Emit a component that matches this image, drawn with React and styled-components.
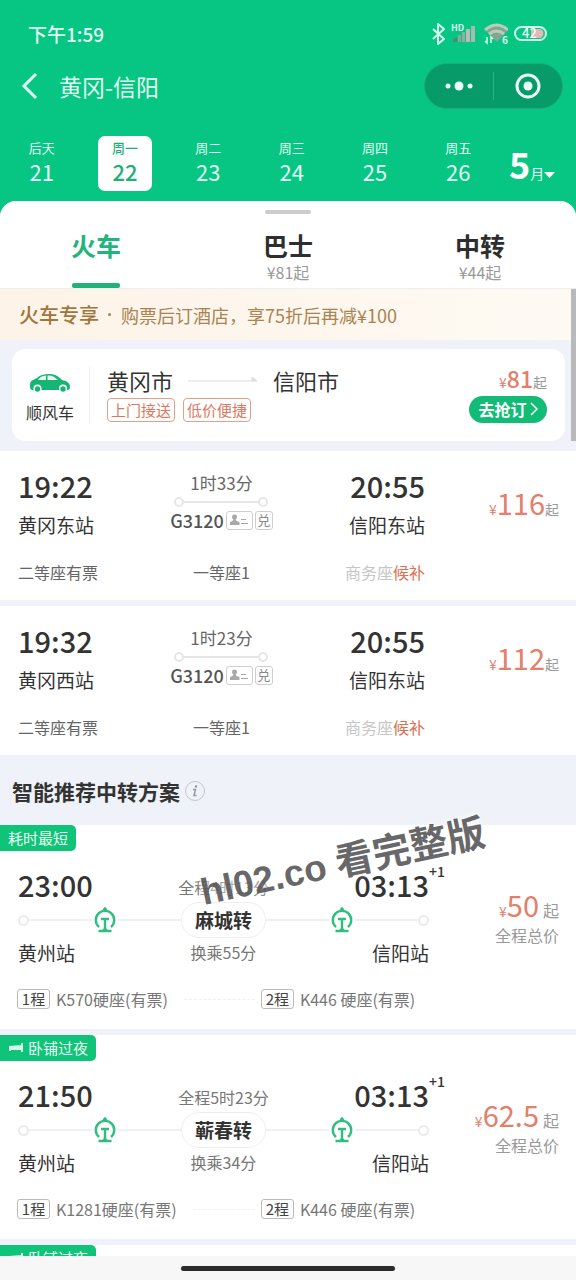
import styled, { createGlobalStyle } from "styled-components";

const GlobalStyle = createGlobalStyle`
  * {
    box-sizing: border-box;
  }
  body {
    margin: 0;
    font-family: "Noto Sans CJK SC", sans-serif;
    color: #333333;
  }
  button {
    font-family: inherit;
    color: inherit;
    background: none;
    border: none;
    padding: 0;
    cursor: pointer;
  }
  p, h1, h2 {
    margin: 0;
    font-weight: 400;
  }
`;

const Page = styled.div`
  height: 100vh;
  display: flex;
  flex-direction: column;
  overflow: hidden;
  background: #07c583;
`;

const Header = styled.header`
  color: #e2fff3;
`;

const StatusBar = styled.div`
  height: 60px;
  padding: 6px 29px 0 28px;
  display: flex;
  align-items: center;
  justify-content: space-between;
  font-size: 19px;
  font-weight: 500;
  .icons {
    display: flex;
    align-items: center;
    gap: 6px;
    padding-top: 2px;
  }
`;

const NavBar = styled.nav`
  height: 52px;
  padding: 0 13px 0 20px;
  display: flex;
  align-items: center;
  .back {
    display: flex;
    margin-right: 19px;
  }
  h1 {
    flex: 1;
    font-size: 23px;
    line-height: 32px;
  }
`;

const Capsule = styled.div`
  width: 139px;
  height: 46px;
  border-radius: 23px;
  border: 1px solid #1cab7a;
  background: #069b69;
  display: flex;
  align-items: center;
  button {
    flex: 1;
    height: 28px;
    display: flex;
    align-items: center;
    justify-content: center;
  }
  button + button {
    border-left: 1px solid #2fb185;
  }
`;

const DateStrip = styled.div`
  padding: 24px 0 10px;
  display: grid;
  grid-template-columns: repeat(6, 1fr) 76px;
  justify-items: center;
`;

const DateItem = styled.button`
  width: 54px;
  height: 55px;
  border-radius: 7px;
  display: flex;
  flex-direction: column;
  align-items: center;
  padding-top: 3px;
  background: ${(p) => (p.$active ? "#ffffff" : "transparent")};
  color: ${(p) => (p.$active ? "#1fae78" : "#e2fff3")};
  font-weight: ${(p) => (p.$active ? 500 : 400)};
  .week {
    font-size: 13px;
    line-height: 18px;
  }
  .day {
    font-size: 22px;
    line-height: 28px;
  }
`;

const Month = styled.button`
  justify-self: start;
  padding-left: 9px;
  display: flex;
  align-items: baseline;
  color: #e2fff3;
  b {
    font-size: 36px;
    line-height: 55px;
    color: #ffffff;
  }
  span {
    font-size: 14px;
  }
`;

const Sheet = styled.main`
  flex: 1;
  min-height: 0;
  overflow: hidden;
  border-radius: 16px 16px 0 0;
  background: #eff3f9;
`;

const Tabs = styled.div`
  background: #ffffff;
  border-bottom: 1px solid #eeeeee;
  padding-top: 9px;
  .grip {
    width: 46px;
    height: 4px;
    border-radius: 2px;
    background: #cccccc;
    margin: 0 auto;
  }
  .row {
    display: grid;
    grid-template-columns: repeat(3, 1fr);
  }
`;

const Tab = styled.button`
  height: 74px;
  padding-top: 14px;
  display: flex;
  flex-direction: column;
  align-items: center;
  color: ${(p) => (p.$active ? "#1fb57c" : "#2e2e2e")};
  .name {
    font-size: 25px;
    font-weight: 700;
    line-height: 34px;
  }
  .from {
    font-size: 16px;
    line-height: 20px;
    color: #999999;
  }
  .line {
    width: 48px;
    height: 5px;
    border-radius: 2px;
    background: #22b07b;
    margin-top: auto;
  }
`;

const List = styled.div`
  position: relative;
`;

const ScrollThumb = styled.div`
  position: absolute;
  top: 0;
  right: 0;
  width: 5px;
  height: 152px;
  background: #b9b9bc;
`;

const Promo = styled.div`
  height: 51px;
  padding: 0 19px;
  display: flex;
  align-items: center;
  background: linear-gradient(90deg, #fdf3e8, #fefaf3);
  color: #a98350;
  font-size: 18px;
  strong {
    font-size: 20px;
    font-weight: 500;
    color: #a1763c;
  }
  .dot {
    width: 3px;
    height: 3px;
    border-radius: 50%;
    background: #a98350;
    margin: 0 10px 0 9px;
  }
`;

const RideCard = styled.section`
  margin: 9px 11px 10px 12px;
  height: 92px;
  padding: 0 18px 0 14px;
  border-radius: 14px;
  background: #ffffff;
  display: flex;
  align-items: center;
  .kind {
    display: flex;
    flex-direction: column;
    align-items: center;
    gap: 8px;
    padding: 6px 15px 0 0;
    margin-right: 17px;
    font-size: 16px;
    line-height: 22px;
    border-right: 1px solid #f0f0f0;
  }
  .trip {
    flex: 1;
  }
  .cities {
    display: flex;
    align-items: center;
    gap: 15px;
    font-size: 22px;
    line-height: 30px;
    margin-bottom: 3px;
  }
  .tags {
    display: flex;
    gap: 8px;
    margin-bottom: 4px;
  }
  .buy {
    display: flex;
    flex-direction: column;
    align-items: flex-end;
    margin-bottom: 4px;
  }
`;

const Tag = styled.span`
  height: 24px;
  padding: 0 3px;
  border: 1px solid #e0a08a;
  border-radius: 4px;
  color: #dc7860;
  font-size: 15px;
  line-height: 21px;
`;

const BookButton = styled.button`
  width: 78px;
  height: 27px;
  border-radius: 14px;
  background: #12bc76;
  color: #ffffff;
  font-size: 16px;
  font-weight: 700;
  line-height: 24px;
  display: flex;
  align-items: center;
  justify-content: center;
  gap: 3px;
`;

const Price = styled.p`
  display: flex;
  align-items: baseline;
  justify-content: flex-end;
  color: #e2806b;
  font-size: 14px;
  line-height: 28px;
  b {
    font-size: ${(p) => (p.$small ? "23px" : "29px")};
    font-weight: ${(p) => (p.$small ? 500 : 400)};
  }
  .up {
    color: #999999;
    font-size: ${(p) => (p.$wide ? "16px" : "14px")};
    margin-left: ${(p) => (p.$wide ? "4px" : "0")};
  }
`;

const Card = styled.article`
  background: #ffffff;
  margin-bottom: 6px;
`;

const TrainRow = styled(Card)`
  height: 149px;
  padding: 16px 17px 0 18px;
  display: grid;
  grid-template-columns: 1fr 134px;
  .info {
    display: grid;
    grid-template-columns: repeat(3, 1fr);
    align-content: start;
  }
  .side {
    padding-top: 21px;
  }
`;

const Stop = styled.div`
  text-align: ${(p) => (p.$end ? "right" : "left")};
`;

const Time = styled.p`
  position: relative;
  font-size: 29px;
  font-weight: 500;
  line-height: 36px;
  sup {
    position: absolute;
    left: 100%;
    top: -5px;
    font-size: 14px;
    line-height: 20px;
  }
`;

const Station = styled.p`
  font-size: 19px;
  line-height: 26px;
  margin-top: ${(p) => p.$gap || 9}px;
`;

const Middle = styled.div`
  display: flex;
  flex-direction: column;
  align-items: center;
  .duration {
    font-size: 17px;
    line-height: 28px;
    color: #666666;
    margin-top: 2px;
  }
  .code {
    display: flex;
    align-items: center;
    gap: 2px;
    font-size: 18px;
    font-weight: 500;
    line-height: 26px;
    color: #555555;
  }
`;

const Line = styled.div`
  width: 94px;
  height: 10px;
  display: flex;
  align-items: center;
  i {
    width: 10px;
    height: 10px;
    border: 2px solid #e6e6e6;
    border-radius: 50%;
  }
  span {
    flex: 1;
    height: 2px;
    background: #e6e6e6;
  }
`;

const Mark = styled.span`
  height: 19px;
  width: ${(p) => p.$width}px;
  border: 1px solid #cfcfcf;
  border-radius: 3px;
  display: flex;
  align-items: center;
  justify-content: center;
  font-size: 13px;
  font-weight: 400;
  color: #888888;
`;

const Seat = styled.p`
  margin-top: 22px;
  font-size: 16px;
  line-height: 24px;
  color: ${(p) => (p.$off ? "#c6c6c6" : "#666666")};
  text-align: ${(p) => p.$align || "left"};
  em {
    font-style: normal;
    color: #dd6f50;
  }
`;

const SectionTitle = styled.div`
  height: 64px;
  padding: 0 12px 4px;
  display: flex;
  align-items: center;
  gap: 4px;
  h2 {
    font-size: 21px;
    font-weight: 700;
    line-height: 30px;
  }
  button {
    display: flex;
  }
`;

const TransferRow = styled(Card)`
  height: 204px;
`;

const Badge = styled.span`
  display: inline-flex;
  align-items: center;
  gap: 4px;
  height: 26px;
  padding: 0 8px;
  border-radius: 0 5px 5px 0;
  background: #0fc379;
  color: #e9fff5;
  font-size: 15px;
  line-height: 26px;
  vertical-align: top;
`;

const TransferBody = styled.div`
  padding: 15px 17px 0 18px;
  display: grid;
  grid-template-columns: 1fr 130px;
  .side {
    padding-top: 24px;
    text-align: right;
    color: #999999;
    font-size: 16px;
    line-height: 20px;
  }
`;

const Split = styled.div`
  display: grid;
  grid-template-columns: 1fr auto 1fr;
  align-items: start;
  .small {
    font-size: 16px;
    line-height: 24px;
    color: #777777;
    padding-top: ${(p) => p.$pad || 0}px;
  }
`;

const Track = styled.div`
  height: 36px;
  display: flex;
  align-items: center;
  i {
    width: 11px;
    height: 11px;
    border: 2px solid #ebebeb;
    border-radius: 50%;
  }
  span {
    flex: 1;
    height: 2px;
    background: #f0f0f0;
  }
`;

const Hub = styled.b`
  height: 36px;
  padding: 0 13px;
  border: 1px solid #eeeeee;
  border-radius: 18px;
  font-size: 19px;
  font-weight: 700;
  line-height: 34px;
`;

const Legs = styled.div`
  padding: 21px 17px 0;
  display: grid;
  grid-template-columns: 45% 55%;
  font-size: 16px;
  line-height: 24px;
  color: #777777;
  div {
    display: flex;
    align-items: center;
    gap: 6px;
  }
  .dots {
    flex: 1;
    border-top: 1px dashed #f0f0f0;
    margin: 0 6px 0 10px;
  }
`;

const LegNo = styled.span`
  width: 33px;
  height: 20px;
  border: 1px solid #bbbbbb;
  border-radius: 3px;
  color: #444444;
  font-size: 15px;
  line-height: 17px;
  text-align: center;
`;

const HomeBar = styled.footer`
  height: 24px;
  background: #f7f7f7;
  display: flex;
  align-items: center;
  justify-content: center;
  span {
    width: 37%;
    height: 5px;
    border-radius: 3px;
    background: #2b2b2b;
  }
`;

const Watermark = styled.div`
  position: absolute;
  left: 204px;
  top: 866px;
  font-family: "Liberation Sans", "Noto Sans CJK SC", sans-serif;
  font-size: 37px;
  font-weight: 700;
  line-height: 52px;
  white-space: nowrap;
  color: rgba(70, 70, 72, 0.82);
  text-shadow: 0 0 6px #ffffff;
  transform: rotate(-12deg);
  transform-origin: 0 40px;
  pointer-events: none;
  span {
    font-size: 38px;
  }
`;

const StatusIcons = () => (
  <div className="icons">
    <svg width="76" height="24" viewBox="0 0 76 24" fill="none">
      <path d="M1 7l11 10-6 5V2l6 5L1 17" stroke="#d4fff0" strokeWidth="2" strokeLinejoin="round" />
      <path d="M21 20v-3l4-2v5z" fill="#4f8a70" />
      <path d="M26 20v-7h3v7z" fill="#8aa898" />
      <path d="M30 20V10h3v10z" fill="#9ba99f" />
      <path d="M34 20V7h4v13z" fill="#b5c0b8" />
      <path d="M39 20V4h4v16z" fill="#a9bab0" />
      <text x="19" y="9" fontSize="9" fontWeight="700" fill="#d4fff0">HD</text>
      <path d="M53 8q12-10 23 0L65 20z" fill="#7fa890" />
      <path d="M53 8q12-10 23 0M57 12q8-6 15 0" stroke="#bccabf" strokeWidth="3" />
      <path d="M55 15v6l-2-2M59 21v-6l2 2" stroke="#d4fff0" strokeWidth="1.5" />
      <text x="70" y="22" fontSize="10" fontWeight="700" fill="#e2fff3">6</text>
    </svg>
    <svg width="33" height="24" viewBox="0 0 33 24" fill="none">
      <rect x="1" y="5" width="31" height="13" rx="6.5" stroke="#d4fff0" strokeWidth="2" />
      <path d="M17 7h8a4.5 4.5 0 010 9h-8z" fill="#e6b7b9" />
      <text x="8" y="16" fontSize="13" fontWeight="500" fill="#eafff8">42</text>
    </svg>
  </div>
);

const CarIcon = () => (
  <svg width="42" height="20" viewBox="0 0 42 20">
    <path d="M1 12c0-3 1-4 3-5l4-2C11 2 15 1 20 1c6 0 9 2 13 6 5 1 8 3 8 7 0 2-1 3-3 3H4c-3 0-3-2-3-5z" fill="#17b573" />
    <path d="M9 7c2-3 4-4 8-4.500V7zM18.500 2.500C23 2 26 4 29 7H18.500z" fill="#e6f8ef" />
    <circle cx="8.500" cy="15.500" r="4" fill="#ffffff" />
    <circle cx="34" cy="15.500" r="4" fill="#ffffff" />
    <circle cx="8.500" cy="16" r="2.700" fill="#17b573" />
    <circle cx="34" cy="16" r="2.700" fill="#17b573" />
  </svg>
);

const RailIcon = () => (
  <svg width="26" height="26" viewBox="0 0 26 26" fill="none" stroke="#2fbd80" strokeWidth="2.400">
    <path d="M7 20A9.200 9.200 0 1119 20" />
    <path d="M11.500 3l1.500-1.500L14.500 3" />
    <path d="M9 12h8M13 12v11M6.500 24h13" />
    <path d="M11 23c1.500-.5 2-1.500 2-3 0 1.500.5 2.500 2 3" strokeWidth="1.500" />
  </svg>
);

const BedIcon = () => (
  <svg width="16" height="10" viewBox="0 0 16 10" fill="#d4fbe8">
    <path d="M1 3l12-1v5H1zM13 0h2v9h-2zM1 7h2v1H1z" />
  </svg>
);

const IdIcon = () => (
  <svg width="20" height="12" viewBox="0 0 20 12" fill="#a9a9a9">
    <circle cx="5.500" cy="3" r="2.500" />
    <path d="M4.500 5h2l1 2 3 1v3H1V8l2.500-1zM12 5h5v1h-5zM12 9h7v1h-7z" />
  </svg>
);

const dates = [
  { week: "后天", day: 21 },
  { week: "周一", day: 22, active: true },
  { week: "周二", day: 23 },
  { week: "周三", day: 24 },
  { week: "周四", day: 25 },
  { week: "周五", day: 26 },
];

const tabs = [
  { name: "火车", active: true },
  { name: "巴士", from: "¥81起" },
  { name: "中转", from: "¥44起" },
];

const trains = [
  { start: "19:22", from: "黄冈东站", time: "1时33分", price: "116" },
  { start: "19:32", from: "黄冈西站", time: "1时23分", price: "112" },
];

const transfers = [
  { id: 1, badge: "耗时最短", start: "23:00", total: "全程4时13分", hub: "麻城转", wait: "换乘55分", price: "50", leg: "K570硬座(有票)" },
  { id: 2, badge: "卧铺过夜", bed: true, start: "21:50", total: "全程5时23分", hub: "蕲春转", wait: "换乘34分", price: "62.5", leg: "K1281硬座(有票)" },
];

const TrainItem = ({ start, from, time, price }) => (
  <TrainRow>
    <div className="info">
      <Stop>
        <Time>{start}</Time>
        <Station>{from}</Station>
      </Stop>
      <Middle>
        <p className="duration">{time}</p>
        <Line>
          <i />
          <span />
          <i />
        </Line>
        <div className="code">
          G3120
          <Mark $width={27}>
            <IdIcon />
          </Mark>
          <Mark $width={18}>兑</Mark>
        </div>
      </Middle>
      <Stop $end>
        <Time>20:55</Time>
        <Station>信阳东站</Station>
      </Stop>
      <Seat>二等座有票</Seat>
      <Seat $align="center">一等座1</Seat>
      <Seat $off $align="right">
        商务座<em>候补</em>
      </Seat>
    </div>
    <div className="side">
      <Price>
        ¥<b>{price}</b>
        <span className="up">起</span>
      </Price>
    </div>
  </TrainRow>
);

const TransferItem = ({ data }) => (
  <TransferRow>
    <Badge>
      {data.bed && <BedIcon />}
      {data.badge}
    </Badge>
    <TransferBody>
      <div>
        <Split $pad={9}>
          <Time>{data.start}</Time>
          <p className="small">{data.total}</p>
          <Stop $end>
            <Time>
              03:13<sup>+1</sup>
            </Time>
          </Stop>
        </Split>
        <Track>
          <i />
          <span />
          <RailIcon />
          <span />
          <Hub>{data.hub}</Hub>
          <span />
          <RailIcon />
          <span />
          <i />
        </Track>
        <Split $pad={2}>
          <Station $gap={2}>黄州站</Station>
          <p className="small">{data.wait}</p>
          <Stop $end>
            <Station $gap={2}>信阳站</Station>
          </Stop>
        </Split>
      </div>
      <div className="side">
        <Price $wide>
          ¥<b>{data.price}</b>
          <span className="up">起</span>
        </Price>
        全程总价
      </div>
    </TransferBody>
    <Legs>
      <div>
        <LegNo>1程</LegNo>
        {data.leg}
        <span className="dots" />
      </div>
      <div>
        <LegNo>2程</LegNo>
        K446 硬座(有票)
      </div>
    </Legs>
  </TransferRow>
);

const App = () => {
  return (
    <Page>
      <GlobalStyle />
      <Header>
        <StatusBar>
          <span>下午1:59</span>
          <StatusIcons />
        </StatusBar>
        <NavBar>
          <button className="back" aria-label="返回">
            <svg width="20" height="28" viewBox="0 0 20 28" fill="none">
              <path d="M16 2L4 14l12 12" stroke="#e2fff3" strokeWidth="3" />
            </svg>
          </button>
          <h1>黄冈-信阳</h1>
          <Capsule>
            <button aria-label="更多">
              <svg width="28" height="10" viewBox="0 0 28 10" fill="#e9fff8">
                <circle cx="3" cy="5" r="2.500" />
                <circle cx="14" cy="5" r="4.500" />
                <circle cx="25" cy="5" r="2.500" />
              </svg>
            </button>
            <button aria-label="关闭">
              <svg width="26" height="26" viewBox="0 0 26 26">
                <circle cx="13" cy="13" r="11" fill="none" stroke="#e9fff8" strokeWidth="3" />
                <circle cx="13" cy="13" r="4.500" fill="#e9fff8" />
              </svg>
            </button>
          </Capsule>
        </NavBar>
        <DateStrip>
          {dates.map((d) => (
            <DateItem key={d.day} $active={d.active}>
              <span className="week">{d.week}</span>
              <span className="day">{d.day}</span>
            </DateItem>
          ))}
          <Month>
            <b>5</b>
            <span>月</span>
            <svg width="11" height="7" viewBox="0 0 11 7">
              <path d="M0 0h11L5.500 6z" fill="#ffffff" />
            </svg>
          </Month>
        </DateStrip>
      </Header>
      <Sheet>
        <Tabs>
          <div className="grip" />
          <div className="row">
            {tabs.map((t) => (
              <Tab key={t.name} $active={t.active}>
                <span className="name">{t.name}</span>
                {t.from && <span className="from">{t.from}</span>}
                {t.active && <span className="line" />}
              </Tab>
            ))}
          </div>
        </Tabs>
        <List>
          <ScrollThumb />
          <Promo>
            <strong>火车专享</strong>
            <span className="dot" />
            <span>购票后订酒店，享75折后再减¥100</span>
          </Promo>
          <RideCard>
            <div className="kind">
              <CarIcon />
              顺风车
            </div>
            <div className="trip">
              <div className="cities">
                黄冈市
                <svg width="70" height="6" viewBox="0 0 70 6">
                  <path d="M0 4h69l-5-4v4" fill="#dddddd" stroke="#dddddd" />
                </svg>
                信阳市
              </div>
              <div className="tags">
                <Tag>上门接送</Tag>
                <Tag>低价便捷</Tag>
              </div>
            </div>
            <div className="buy">
              <Price $small>
                ¥<b>81</b>
                <span className="up">起</span>
              </Price>
              <BookButton>
                去抢订
                <svg width="8" height="14" viewBox="0 0 8 14" fill="none">
                  <path d="M1 1l6 6-6 6" stroke="#ffffff" strokeWidth="1.500" />
                </svg>
              </BookButton>
            </div>
          </RideCard>
          {trains.map((t) => (
            <TrainItem key={t.start} {...t} />
          ))}
          <SectionTitle>
            <h2>智能推荐中转方案</h2>
            <button aria-label="说明">
              <svg width="22" height="22" viewBox="0 0 22 22" fill="none">
                <circle cx="11" cy="11" r="9.500" stroke="#c3c6ca" />
                <path d="M9 9.500h2.500L10 15.500h2.500" stroke="#999999" strokeWidth="1.500" />
                <circle cx="12" cy="6.500" r="1.200" fill="#999999" />
              </svg>
            </button>
          </SectionTitle>
          {transfers.map((t) => (
            <TransferItem key={t.id} data={t} />
          ))}
          <Card>
            <Badge>
              <BedIcon />
              卧铺过夜
            </Badge>
          </Card>
        </List>
      </Sheet>
      <HomeBar>
        <span />
      </HomeBar>
      <Watermark>
        hl02.co <span>看完整版</span>
      </Watermark>
    </Page>
  );
};

export default App;
